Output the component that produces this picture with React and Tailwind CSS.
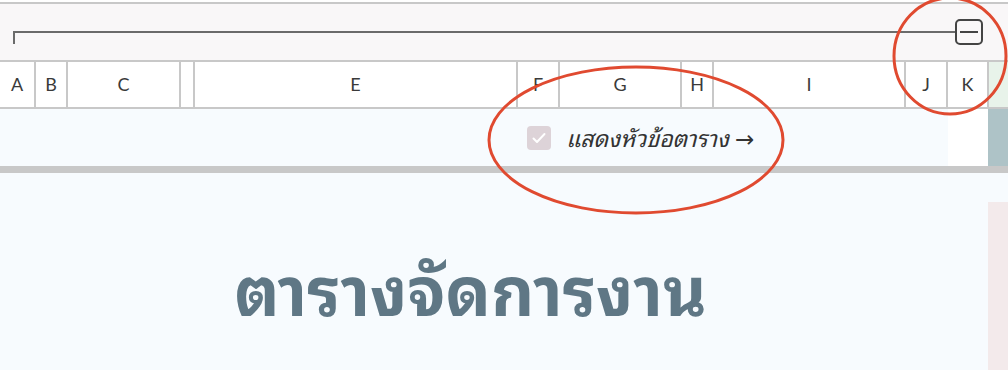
import React from 'react';

const cols = [
  { label: 'A', w: 'w-[36px]' },
  { label: 'B', w: 'w-[32px]' },
  { label: 'C', w: 'w-[113px]' },
  { label: '', w: 'w-[14px]' },
  { label: 'E', w: 'w-[323px]' },
  { label: 'F', w: 'w-[42px]' },
  { label: 'G', w: 'w-[122px]' },
  { label: 'H', w: 'w-[32px]' },
  { label: 'I', w: 'w-[192px]' },
  { label: 'J', w: 'w-[42px]' },
  { label: 'K', w: 'w-[41px]' },
];

const thai = { fontFamily: '"Noto Sans Thai Looped", "Noto Sans Thai", "Noto Sans", "DejaVu Sans", sans-serif' };

const App = () => {
  return (
    <div className="relative w-[1008px] h-[370px] overflow-hidden bg-white font-['Lato',sans-serif]">
      {/* Toolbar with range */}
      <div className="mt-[2px] border-t-2 border-[#c8c8c8] bg-[#f9f7f8] h-[58px] flex items-start">
        <div className="mt-[27px] ml-[13px] w-[942px] h-[13px] border-t-2 border-l-2 border-[#6b6b6b]" />
        <div className="mt-[15px] w-[28px] h-[26px] rounded-[5px] border-2 border-[#444] flex items-center justify-center">
          <div className="w-[18px] h-[2px] bg-[#444]" />
        </div>
      </div>

      {/* Column headers */}
      <div className="flex h-[49px] border-y-2 border-[#c8c8c8] bg-white">
        {cols.map((c, i) => (
          <div
            key={i}
            className={`${c.w} shrink-0 border-r-2 border-[#c8c8c8] flex items-center justify-center text-[18px] text-[#3a3a3a]`}
          >
            {c.label}
          </div>
        ))}
        <div className="flex-1 bg-[#e8f3ea]" />
      </div>

      {/* Options row */}
      <div className="flex h-[57px]">
        <div className="w-[948px] bg-[#f7fbfe] flex items-center pl-[527px]">
          <div className="w-[24px] h-[24px] rounded-[4px] bg-[#ddd3d8] flex items-center justify-center">
            <svg width="16" height="16" viewBox="0 0 16 16" fill="none">
              <path d="M2.5 8.5l3.5 3.5 7.5-8" stroke="#fff" strokeWidth="2" strokeLinecap="round" strokeLinejoin="round" />
            </svg>
          </div>
          <span className="ml-[15px] italic text-[23px] text-[#333]" style={thai}>
            แสดงหัวข้อตาราง →
          </span>
        </div>
        <div className="w-[40px] bg-white" />
        <div className="flex-1 bg-[#aec3c7]" />
      </div>

      <div className="h-[7px] bg-[#c8c8c8]" />

      {/* Main */}
      <div className="flex h-[197px] bg-[#f7fbfe]">
        <div className="w-[988px] flex justify-center pr-[47px] pt-[79px]">
          <h1 className="text-[67px] leading-none font-bold text-[#5f7785]" style={thai}>
            ตารางจัดการงาน
          </h1>
        </div>
        <div className="flex-1 flex flex-col">
          <div className="h-[29px]" />
          <div className="flex-1 bg-[#f3eaeb]" />
        </div>
      </div>

      {/* Annotation marks */}
      <svg className="absolute inset-0 pointer-events-none" width="1008" height="370">
        <ellipse cx="636" cy="140" rx="147" ry="73" fill="none" stroke="#e04a30" strokeWidth="3" />
        <ellipse cx="950" cy="56" rx="56" ry="58" fill="none" stroke="#e04a30" strokeWidth="3" />
      </svg>
    </div>
  );
};

export default App;
